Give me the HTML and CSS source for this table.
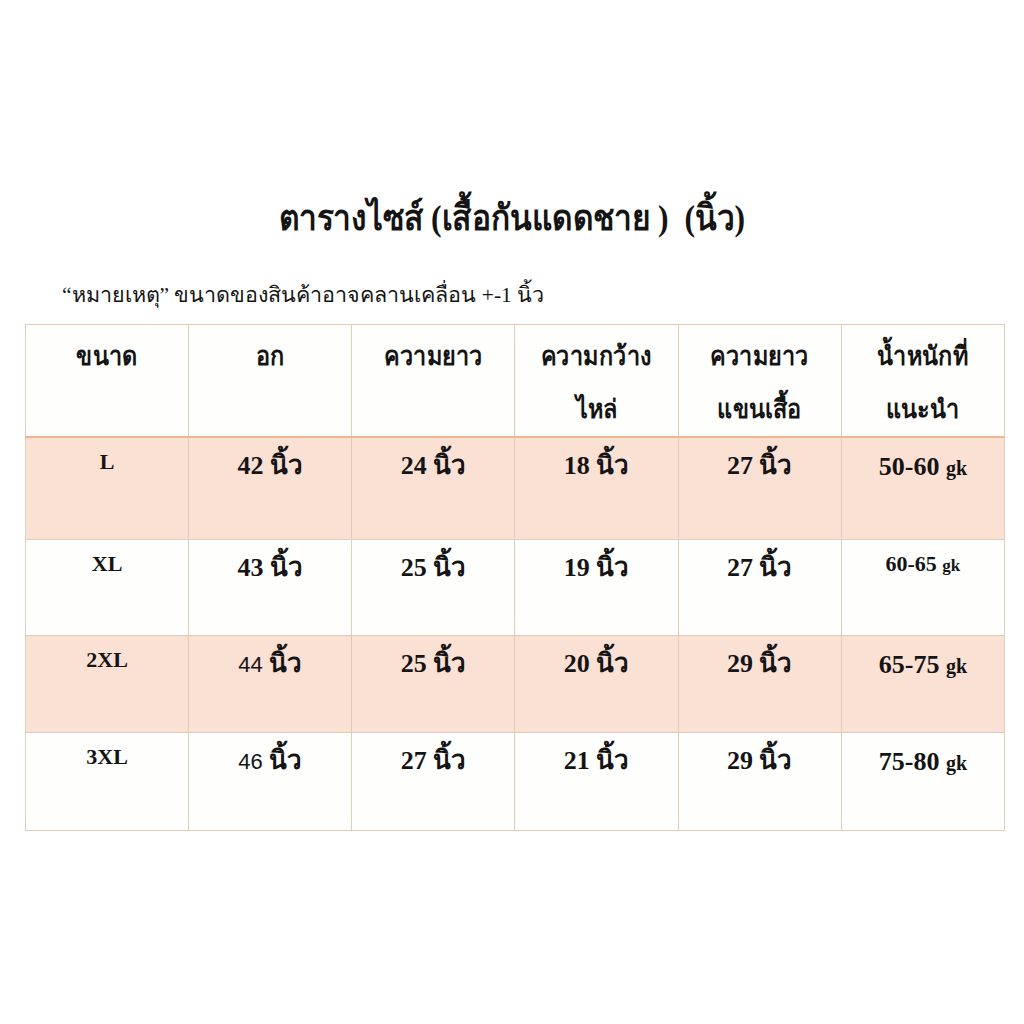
FILE: index.html
```html
<!DOCTYPE html>
<html lang="th">
<head>
<meta charset="utf-8">
<link rel="stylesheet" href="styles.css">
</head>
<body>
<div class="page">
  <h1 class="title"><span class="squeeze">ตารางไซส์ (เสื้อกันแดดชาย )&nbsp; (นิ้ว)</span></h1>
  <p class="note">“หมายเหตุ” ขนาดของสินค้าอาจคลานเคลื่อน +-1 นิ้ว</p>
  <table class="chart">
    <thead>
      <tr class="head">
        <th><span class="hs">ขนาด</span></th>
        <th><span class="hs">อก</span></th>
        <th><span class="hs">ความยาว</span></th>
        <th><span class="hs">ความกว้าง<br>ไหล่</span></th>
        <th><span class="hs">ความยาว<br>แขนเสื้อ</span></th>
        <th><span class="hs">น้ำหนักที่<br>แนะนำ</span></th>
      </tr>
    </thead>
    <tbody>
      <tr class="r1 pink">
        <td class="size">L</td>
        <td>42 นิ้ว</td>
        <td>24 นิ้ว</td>
        <td>18 นิ้ว</td>
        <td>27 นิ้ว</td>
        <td class="wt">50-60 <span class="gk">gk</span></td>
      </tr>
      <tr class="r2">
        <td class="size">XL</td>
        <td>43 นิ้ว</td>
        <td>25 นิ้ว</td>
        <td>19 นิ้ว</td>
        <td>27 นิ้ว</td>
        <td class="wt small">60-65 <span class="gk">gk</span></td>
      </tr>
      <tr class="r3 pink">
        <td class="size">2XL</td>
        <td><span class="sans">44</span> นิ้ว</td>
        <td>25 นิ้ว</td>
        <td>20 นิ้ว</td>
        <td>29 นิ้ว</td>
        <td class="wt">65-75 <span class="gk">gk</span></td>
      </tr>
      <tr class="r4">
        <td class="size">3XL</td>
        <td><span class="sans">46</span> นิ้ว</td>
        <td>27 นิ้ว</td>
        <td>21 นิ้ว</td>
        <td>29 นิ้ว</td>
        <td class="wt">75-80 <span class="gk">gk</span></td>
      </tr>
    </tbody>
  </table>
</div>
</body>
</html>
```
FILE: styles.css
```css
html, body {
  margin: 0;
  padding: 0;
  background: #ffffff;
}
body {
  font-family: "Liberation Serif", serif;
  color: #141414;
}
.page {
  width: 1024px;
  height: 1024px;
  padding-top: 193px;
  box-sizing: border-box;
}
.title {
  margin: 0;
  text-align: center;
  font-size: 36px;
  font-weight: bold;
  line-height: 50px;
}
.squeeze {
  display: inline-block;
  transform: scaleX(0.88);
  white-space: nowrap;
}
.note {
  margin: 37px 0 0 62px;
  font-size: 21.5px;
  line-height: 30px;
}
.chart {
  margin: 14px 0 0 25px;
  width: 980px;
  border-collapse: collapse;
  table-layout: fixed;
  background: #fefefd;
}
.chart th,
.chart td {
  border: 1px solid #e2cbb9;
  text-align: center;
  vertical-align: top;
  padding: 0;
  font-weight: bold;
}
.chart th {
  font-size: 26px;
  line-height: 53px;
  padding-top: 5px;
  font-family: "Liberation Sans", sans-serif;
}
.hs {
  display: inline-block;
  transform: scaleX(0.9);
  white-space: nowrap;
}
.head {
  height: 111px;
}
.head th {
  border-bottom: 2px solid #f2b590;
}
.chart td {
  font-size: 26px;
  line-height: 32px;
  padding-top: 12px;
}
.r1 { height: 102px; }
.r2 { height: 96px; }
.r3 { height: 97px; }
.r4 { height: 98px; }
.pink td {
  background: #fbe0d4;
}
.chart td.size {
  font-size: 22px;
  line-height: 28px;
  padding-top: 10px;
}
.chart td.wt {
  font-size: 26px;
  line-height: 32px;
  padding-top: 13px;
}
.chart td.wt.small {
  font-size: 22px;
  line-height: 28px;
  padding-top: 10px;
}
.gk {
  font-size: 20px;
}
.small .gk {
  font-size: 17px;
}
.sans {
  font-family: "Liberation Sans", sans-serif;
  font-weight: normal;
  font-size: 22px;
}
```
